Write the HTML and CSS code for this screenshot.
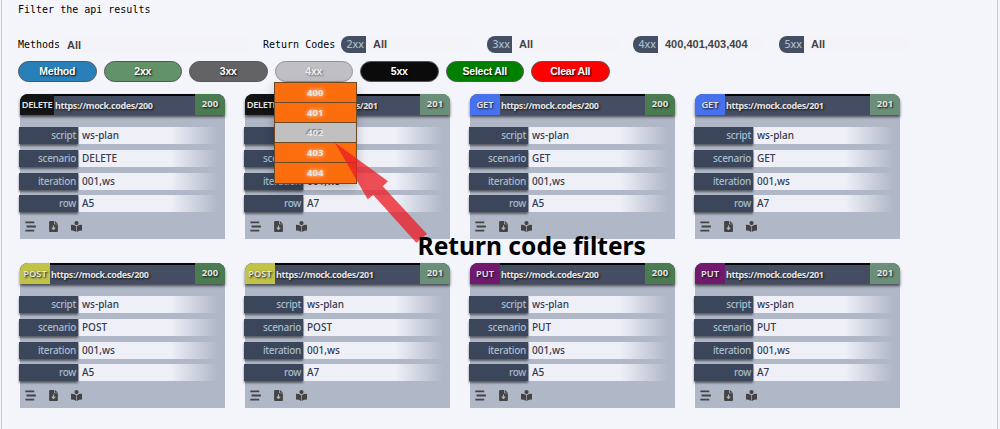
FILE: index.html
```
<!DOCTYPE html>
<html lang="en">
<head>
<meta charset="utf-8">
<title>API results</title>
<link rel="stylesheet" href="styles.css">
</head>
<body>
<svg class="defs" width="0" height="0" aria-hidden="true">
  <symbol id="lines" viewBox="0 0 10 10"><path d="M0.3 1.3H8.4M1.4 5H9.9M0.3 8.7H8.4" fill="none" stroke="#444" stroke-width="1.7"/></symbol>
  <symbol id="file" viewBox="0 0 8 10"><path d="M1 0H4.6V3H8V9.2Q8 10 7.2 10H.8Q0 10 0 9.2V.8Q0 0 1 0ZM5.3 0L8 2.4H5.3Z" fill="#444"/><path d="M4 4V7.4M2.4 6L4 7.7L5.6 6" fill="none" stroke="#b0b7c7" stroke-width="1"/></symbol>
  <symbol id="reader" viewBox="0 0 10 10"><circle cx="5" cy="1.9" r="1.9" fill="#444"/><path d="M0 3.5Q2.8 3.4 4.7 4.8V10Q2.8 8.7 0 8.7ZM10 3.5Q7.2 3.4 5.3 4.8V10Q7.2 8.7 10 8.7Z" fill="#444"/></symbol>
</svg>
<main class="panel">
  <h1 class="title">Filter the api results</h1>
  <div class="status">
    <span class="status-label">Methods</span><span class="field field-methods">All</span>
    <span class="status-label codes-label">Return Codes</span>
    <div class="code"><span class="badge">2xx</span><span class="field">All</span></div>
    <div class="code"><span class="badge">3xx</span><span class="field">All</span></div>
    <div class="code"><span class="badge">4xx</span><span class="field">400,401,403,404</span></div>
    <div class="code"><span class="badge">5xx</span><span class="field">All</span></div>
  </div>
  <nav class="buttons">
    <button class="btn blue">Method</button>
    <button class="btn green">2xx</button>
    <button class="btn gray">3xx</button>
    <div class="drop">
      <button class="btn silver">4xx</button>
      <ul class="menu"><li>400</li><li>401</li><li class="off">402</li><li>403</li><li>404</li></ul>
    </div>
    <button class="btn black">5xx</button>
    <button class="btn select">Select All</button>
    <button class="btn clear">Clear All</button>
  </nav>
  <section class="cards" id="cards"></section>
</main>
<svg class="arrow" width="100" height="110" viewBox="330 138 100 110"><path d="M335 142.7L388 181.3L382.7 186.3L427 234L416.3 242.7L373.3 195L367.7 199.3Z"/></svg>
<div class="callout">Return code filters</div>
<script src="cards.js"></script>
</body>
</html>
```
FILE: styles.css
```
* { box-sizing: border-box; }
body { margin: 0; width: 1000px; height: 429px; overflow: hidden; background: #f4f5fb; position: relative; }
.defs { position: absolute; }
.panel { margin: 0 2px 0 1px; height: 429px; border: solid #c9cad0; border-width: 0 1px; padding: 3px 0 0 16px; }
.title, .status-label { font: 10px/14px "DejaVu Sans Mono", monospace; color: #000; margin: 0; white-space: nowrap; }
.status { display: flex; height: 17px; margin-top: 19px; align-items: center; }
.status-label { width: 45px; }
.codes-label { width: 78px; margin-left: 15px; }
.field { display: block; height: 16px; flex: 1; background: #f4f3f8; padding-left: 4px; font: bold 11px/16px "Liberation Sans", Arial, sans-serif; color: #444; white-space: nowrap; }
.field-methods { flex: none; width: 185px; }
.code { display: flex; width: 131px; margin-right: 15px; flex: none; }
.code .field { margin-left: 2px; padding-left: 5px; }
.badge { width: 25px; height: 17px; background: #454f63; color: #a9bccb; border-radius: 8px 0 0 8px; font: 500 10.5px/17px "Noto Sans", sans-serif; text-align: right; padding-right: 2px; }
.buttons { display: flex; gap: 7px; margin-top: 8px; height: 21px; }
.btn { display: block; width: 78.5px; height: 21px; border: 1px solid #555; border-radius: 11px; padding: 0; color: #fff; font: bold 10.5px/19px "Liberation Sans", Arial, sans-serif; letter-spacing: -.25px; text-shadow: 1px 1px 2px #000; }
.blue { background: #2980b9; }
.green { background: #629368; }
.gray { background: #636365; }
.silver { background: #c0c0c4; border-color: #929296; color: #eee; text-shadow: 1px 1px 2px #666; }
.black { background: #0b0b0b; }
.select { background: #008000; }
.clear { background: #f00; }
.drop { position: relative; }
.menu { position: absolute; z-index: 2; top: 21px; left: -.5px; width: 82.5px; margin: 0; padding: 0; list-style: none; border: 1px solid #6c4a28; box-shadow: 0 5px 10px rgba(0,0,0,.22); }
.menu li { height: 20.1px; background: #fc6d0e; color: #e8e8e8; font: bold 9.5px/19px "Noto Sans", sans-serif; text-align: center; border-bottom: 1px solid #6c4a28; text-shadow: 0 0 4px #fff; }
.menu li:last-child { border-bottom: 0; }
.menu .off { background: #c0c0c0; text-shadow: -1px -1px 1px #777; }
.cards { display: grid; grid-template-columns: repeat(4, 205px); gap: 24px 20px; margin: 12px 0 0 2px; }
.card { height: 145px; background: #b0b7c7; border-radius: 8px 8px 0 0; font-family: "Noto Sans", sans-serif; }
.head { display: flex; height: 21px; border-radius: 8px 8px 0 0; overflow: hidden; background: #454d62; font-weight: 700; color: #e4e4e4; font-size: 9px; line-height: 22px; text-shadow: 1px 1px 2px #111; }
.head-shadow { border-radius: 8px 8px 0 0; box-shadow: 0 2px 3px rgba(0,0,0,.6); }
.method { width: 30px; text-align: center; white-space: nowrap; flex: none; font-weight: 600; font-size: 9.3px; }
.delete { width: 34px; background: #141414; letter-spacing: -.35px; }
.get { background: #4871ed; }
.post { background: #c0c346; }
.put { background: #71196f; }
.url { flex: 1; border-top: 2px solid #050505; padding-left: 1px; line-height: 19px; white-space: nowrap; letter-spacing: -.39px; }
.result { width: 30px; text-align: center; line-height: 20px; font-size: 9.5px; }
.ok { background: #4b7b50; }
.created { background: #6b8f78; }
.rows { display: grid; gap: 5.8px; padding-top: 12px; margin-left: -1px; }
.row { display: flex; height: 17px; font-size: 10px; line-height: 16.5px; }
.key { width: 59px; background: #3b465b; color: #a6bccb; text-align: right; padding-right: 2px; box-shadow: 0 2px 2px rgba(0,0,0,.5); position: relative; letter-spacing: -.32px; font-weight: 500; }
.val { width: 139px; margin-left: 1px; padding-left: 3px; color: #333b50; font-weight: 500; background: linear-gradient(90deg, #eeeff7 66%, #b0b7c7); }
.icons { display: flex; align-items: center; gap: 13px; padding: 9px 0 0 5px; }
.icon { display: block; height: 11px; }
.arrow { position: absolute; z-index: 3; left: 330px; top: 138px; }
.arrow path { fill: #ed1c24; fill-opacity: .76; }
.callout { position: absolute; z-index: 4; left: 417.5px; top: 230px; font: bold 24.6px/32px "Noto Sans", sans-serif; color: #000; white-space: nowrap; }
```
FILE: cards.js
```
const methods = ["DELETE", "GET", "POST", "PUT"];
const icon = (name, width) => `<svg class="icon" width="${width}" height="11"><use href="#${name}"/></svg>`;
const card = (method, code) => {
  const values = { script: "ws-plan", scenario: method, iteration: "001,ws", row: code === 200 ? "A5" : "A7" };
  const rows = Object.entries(values).map(([k, v]) => `<div class="row"><span class="key">${k}</span><span class="val">${v}</span></div>`).join("");
  return `<article class="card"><div class="head-shadow"><header class="head"><span class="method ${method.toLowerCase()}">${method}</span><span class="url">https://mock.codes/${code}</span><span class="result ${code === 200 ? "ok" : "created"}">${code}</span></header></div><div class="rows">${rows}</div><div class="icons">${icon("lines", 11)}${icon("file", 9)}${icon("reader", 11)}</div></article>`;
};
document.getElementById("cards").innerHTML = methods.flatMap(m => [card(m, 200), card(m, 201)]).join("");
```
